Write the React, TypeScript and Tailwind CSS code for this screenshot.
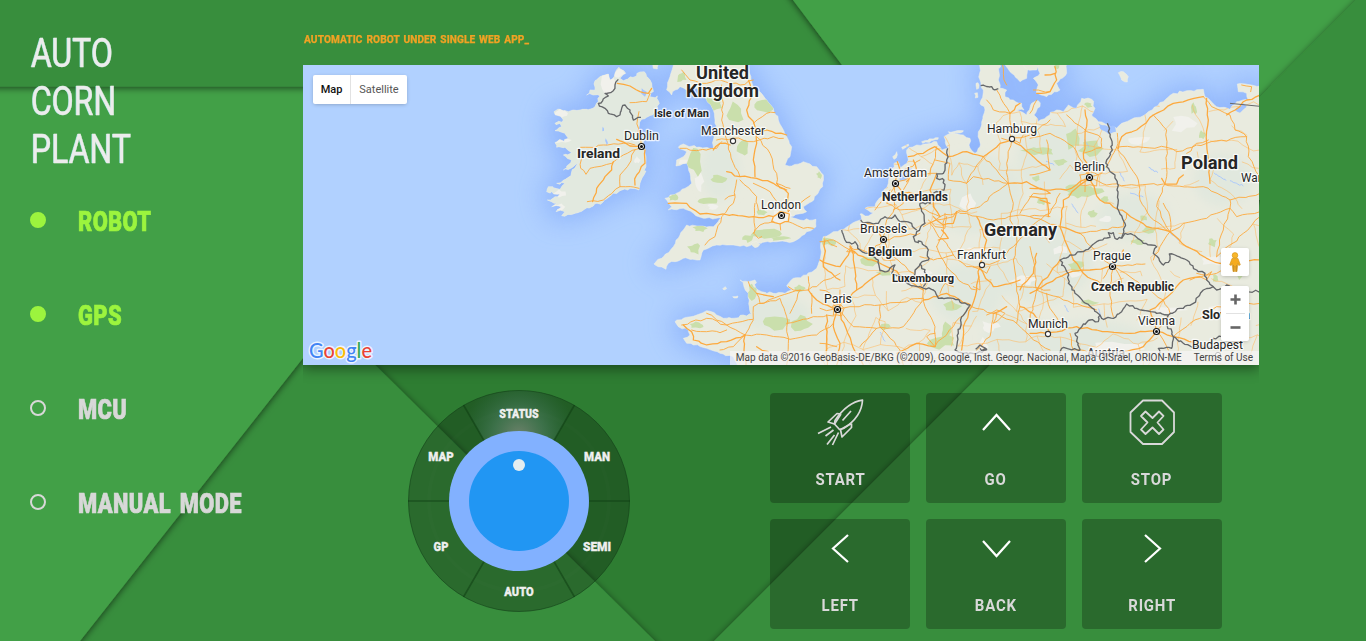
import React from "react";

/* ---------- geometry helpers ---------- */

type Pt = [number, number];

const parse = (s: string): Pt[] =>
  s.trim().split(/\s+/).map((p) => p.split(",").map(Number) as Pt);

const noise = (a: number, b: number) => {
  const v = Math.sin(a * 12.9898 + b * 78.233) * 43758.5453;
  return v - Math.floor(v) - 0.5;
};

/* Breaks straight segments into small uneven steps, as on a surveyed map. */
function rough(s: string, amount: number, step: number, closed = false): string {
  const pts = parse(s);
  if (closed) pts.push(pts[0]);
  const out: string[] = [`M${pts[0][0]} ${pts[0][1]}`];
  for (let i = 1; i < pts.length; i++) {
    const [x0, y0] = pts[i - 1];
    const [x1, y1] = pts[i];
    const len = Math.hypot(x1 - x0, y1 - y0);
    const n = Math.max(1, Math.round(len / step));
    for (let k = 1; k <= n; k++) {
      const t = k / n;
      const x = x0 + (x1 - x0) * t;
      const y = y0 + (y1 - y0) * t;
      const e = k === n ? 0 : amount;
      out.push(`L${(x + noise(x, y) * e).toFixed(1)} ${(y + noise(y, x) * e).toFixed(1)}`);
    }
  }
  return out.join("") + (closed ? "Z" : "");
}

function blob(cx: number, cy: number, rx: number, ry: number): string {
  const out: string[] = [];
  for (let i = 0; i < 11; i++) {
    const a = (i / 11) * Math.PI * 2;
    const r = 0.95 + noise(cx + i, cy) * 0.75;
    out.push(`${(cx + Math.cos(a) * rx * r).toFixed(1)},${(cy + Math.sin(a) * ry * r).toFixed(1)}`);
  }
  return out.join(" ");
}

/* ---------- map data (thirds of a pixel) ---------- */

const ireland =
  "237,22 257,40 240,55 250,62 290,48 300,36 318,42 335,70 340,95 330,110 352,108 358,130 345,150 338,165 320,172 305,178 298,195 300,225 310,250 318,290 318,320 312,345 300,370 297,390 270,385 240,392 215,405 190,425 160,438 130,450 100,462 65,467 75,455 48,455 65,440 35,440 50,430 22,420 45,410 60,402 20,395 25,380 60,388 75,370 50,370 85,352 95,335 110,315 125,295 100,320 70,330 95,300 70,285 95,278 75,262 50,262 45,248 85,235 75,220 45,212 65,200 60,190 45,190 70,180 42,155 60,148 85,155 100,150 140,148 165,140 175,125 180,108 160,105 140,105 150,90 165,90 165,62 180,50 205,42 210,60 225,40";

const britain =
  "400,10 390,50 380,90 395,105 405,90 420,80 440,90 470,85 490,100 500,120 520,150 525,180 528,210 520,240 520,265 470,262 430,252 415,262 440,275 430,290 410,300 408,318 440,310 450,340 455,370 420,395 375,415 395,440 385,450 430,445 460,460 490,475 545,475 520,500 480,498 440,495 420,525 400,560 370,590 342,612 355,620 378,628 385,610 430,595 480,600 490,570 530,555 580,555 620,560 640,550 700,545 760,545 800,515 828,500 828,478 780,480 750,470 800,455 790,440 815,425 848,380 850,345 830,320 790,305 755,318 735,315 750,290 755,260 740,230 715,180 700,145 680,120 640,80 620,10";

const continent =
  "405,785 430,775 470,765 500,752 530,765 550,775 575,775 610,765 635,765 628,740 625,700 612,680 600,660 625,665 645,660 648,685 665,695 700,700 735,700 755,690 740,678 760,655 800,645 830,625 840,600 842,550 850,530 880,515 900,510 930,495 965,480 960,462 985,468 1000,458 975,445 1005,440 1010,425 1030,400 1045,370 1055,340 1062,310 1075,305 1080,330 1105,300 1100,270 1130,255 1190,245 1205,270 1225,265 1212,230 1240,220 1270,225 1290,235 1287,255 1305,280 1320,260 1315,215 1325,195 1335,150 1320,130 1330,90 1320,60 1318,8 1380,8 1375,60 1380,85 1400,90 1395,110 1420,120 1445,130 1452,150 1430,150 1460,165 1475,130 1495,122 1500,140 1482,165 1495,185 1520,170 1550,150 1570,155 1585,135 1610,145 1625,115 1655,118 1665,145 1655,165 1675,185 1705,195 1730,205 1745,190 1770,180 1820,160 1870,125 1900,100 1940,92 1990,88 1995,110 2030,140 2070,148 2090,125 2125,120 2120,100 2095,95 2092,72 2135,75 2170,80 2170,925 600,925 580,890 540,880 500,865 460,855 440,850 430,835 450,825 445,810 415,800";

const islands = [
  "1392,10 1465,10 1460,55 1440,65 1410,35",
  "1485,10 1580,10 1580,40 1550,70 1560,90 1520,110 1490,100 1495,75 1480,55 1500,40",
  "1735,38 1750,35 1765,50 1762,66 1745,60",
  "635,548 650,545 660,553 645,563 635,555",
  "338,12 355,12 352,27 340,25",
  "548,686 556,680 560,686 552,690",
  "578,710 594,708 592,714 582,714",
  "1058,290 1070,275 1072,285 1062,298",
  "1085,262 1105,252 1106,257 1088,268",
  "1145,245 1195,233 1194,238 1148,250",
  "1225,215 1270,212 1268,216 1228,219",
  "1308,70 1314,68 1316,85 1310,88",
  "1304,100 1312,98 1314,112 1306,114",
  "1448,10 1500,10 1490,30 1460,28",
];

const roadsWest = [
  "232,70 270,78 300,95 325,100 335,85",
  "270,128 320,125 330,100",
  "297,155 293,175 294,220 304,258",
  "304,258 270,258 230,238",
  "285,255 250,250 190,255 150,262 122,262",
  "304,262 290,268 250,285 215,310 150,325 138,343 122,325 125,295",
  "220,305 215,330 195,350 170,385 158,425",
  "142,425 190,420 240,380 297,385",
  "285,270 262,320 240,345 240,380",
  "315,270 315,310 290,345 285,375",
  "425,30 450,60 500,70 540,60 600,75 640,60",
  "545,75 550,130 545,180 560,240 580,310 600,350",
  "625,60 635,110 620,150 645,200 650,250 640,300 645,350",
  "640,190 680,160 705,158",
  "530,240 580,235 640,245 700,230 730,235",
  "650,215 680,210 740,225",
  "420,265 470,272 530,265 545,245",
  "650,230 690,280 710,340 710,370 750,385",
  "560,335 600,350 650,355 700,370 740,390",
  "590,360 580,430 545,470 525,530 495,555",
  "600,360 650,410 655,450",
  "385,430 440,430 480,462 550,462 640,470 700,470",
  "645,430 642,520 655,535 665,530",
  "640,370 690,395 720,440",
  "700,470 695,485 720,492 745,485 748,462 720,455 700,470",
  "640,520 660,495 700,485",
  "745,485 790,505 820,505",
  "710,370 745,400 745,455",
  "745,455 780,430 810,408",
  "555,418 585,405",
  "520,270 540,250 570,255",
  "720,490 722,510",
  "425,795 500,775 560,795 640,778 640,740 700,715 780,690",
  "430,795 455,815 460,840 500,855 560,845 615,825",
  "615,825 560,795 500,760",
  "615,825 640,780",
  "615,825 612,870 618,915",
  "615,825 680,825 750,838 830,825 880,790",
  "615,825 580,860 540,870",
  "650,860 685,875",
  "455,810 500,815 540,818 560,810",
  "625,665 650,700 660,730 720,715 740,770 745,850 740,915",
  "650,700 700,710",
  "780,690 765,730 750,760",
  "805,650 805,690 760,690 745,680",
  "805,690 830,720 880,745",
  "805,690 840,670 900,640",
  "740,790 820,770 880,768",
  "855,540 850,620 900,660",
  "860,540 890,560",
  "815,700 815,760",
  "860,765 860,830 862,915",
];

const roadsMid = [
  "52,748 75,720 110,690 100,600 90,560",
  "52,748 20,752 0,745",
  "52,748 100,800 170,805 250,800 310,720",
  "52,748 40,800 60,850 50,915",
  "52,748 30,700 0,690",
  "52,748 90,740 180,735 310,715",
  "52,748 95,850 130,915",
  "40,765 65,768 72,745 60,732 38,738 40,765",
  "60,690 60,740",
  "0,600 60,620 90,570 130,590 200,620 310,690",
  "90,570 40,540 0,545",
  "90,555 105,580 80,575 95,560",
  "110,690 180,640",
  "90,560 150,580 190,540 240,530 300,520",
  "190,540 200,480 225,440 225,370",
  "190,540 170,500 140,490",
  "190,540 220,590 280,640 310,690 315,740 345,800 345,860",
  "225,600 190,600 180,560",
  "225,370 240,330 232,305",
  "225,370 270,350 330,340 350,340",
  "225,370 210,400 200,430 240,450 300,445 360,470",
  "225,370 250,400 300,400 330,430",
  "210,390 195,410 165,450",
  "220,450 250,430 250,390 270,350",
  "265,290 310,280 345,260 385,290 440,275 490,290",
  "350,260 340,310 330,345",
  "240,340 300,300",
  "260,365 290,330 280,300",
  "345,300 390,310 385,360 440,370 490,290",
  "360,470 410,460 480,440 520,400 565,370",
  "360,470 340,440 330,390 350,340",
  "360,470 330,490 350,520 380,550 400,585",
  "310,500 350,480 400,470 420,450",
  "340,470 370,495 400,490 410,455",
  "325,480 345,500 375,505 380,470",
  "375,460 370,520 350,560",
  "355,540 385,535 365,510",
  "300,590 340,600 380,590 400,585",
  "400,585 440,620 480,620",
  "480,620 470,690 455,740 430,800 425,870",
  "460,680 480,690 475,640",
  "460,620 500,640 510,620",
  "480,620 500,540 470,470",
  "480,620 540,600 580,560 620,520 690,500",
  "565,370 560,310 575,240",
  "565,370 620,365 690,400",
  "565,370 580,430 570,480 590,530 580,600 590,680 690,690",
  "490,290 530,330 565,370",
  "490,290 540,250 575,240",
  "440,370 460,350 565,370",
  "575,240 630,225 690,180",
  "575,240 640,290 690,330",
  "575,240 570,160 530,90",
  "570,160 520,150 500,120",
  "570,160 600,130",
  "545,235 600,250 610,225",
  "420,460 520,480 600,465 690,470",
  "310,720 380,700 420,720 455,740",
  "360,700 375,670 400,680",
  "455,740 520,760 590,790 640,840 690,870",
  "520,760 560,740",
  "500,765 530,750 555,760 520,790 530,760",
  "520,760 510,830 470,870",
  "480,625 520,680 600,660",
  "470,690 430,670 380,620 350,560",
  "180,735 180,800 240,870 250,915",
  "345,860 290,850 230,880",
  "345,860 320,830 345,820",
  "345,860 400,800 450,740",
  "600,690 640,640 650,580",
  "590,790 600,740 590,680",
  "690,400 640,400 600,460",
  "660,420 690,430",
  "170,805 120,860",
  "0,850 50,860",
  "690,820 640,760 600,740",
  "548,15 552,60 560,75",
];

const roadsEast = [
  "178,352 160,280 170,200 165,150",
  "160,280 215,262 215,235 160,205 110,165",
  "178,352 130,260 60,220 0,235",
  "178,352 110,390 0,385",
  "178,352 230,375 400,372 430,378 520,380 600,420 690,400",
  "178,352 215,340 260,262 262,220",
  "178,352 100,420 90,500 130,600",
  "150,345 150,375 200,378 205,345 180,335 150,345",
  "165,395 165,360 180,350",
  "178,352 210,420 290,460 350,500 420,515",
  "260,262 300,320 325,360 330,420 360,470 420,515",
  "260,262 410,262 410,350 405,372",
  "265,265 275,230 320,210 370,165 430,130 520,110",
  "370,165 410,210 410,262",
  "410,262 440,275 530,250 650,230",
  "530,115 535,180 530,250 540,320 540,370",
  "520,110 545,140 600,165 615,210 650,230 655,290 690,350",
  "470,280 500,250 535,240",
  "590,165 650,120 690,105",
  "635,75 665,80 662,95",
  "405,372 380,440 420,515",
  "395,355 405,372 440,372 460,345",
  "400,430 420,470 420,515",
  "420,515 460,490 530,475 560,460 600,445 600,420",
  "420,515 470,560 540,600 570,610",
  "420,515 390,560 370,600",
  "600,445 580,510 560,590",
  "510,650 460,660 400,720 360,750 379,814",
  "500,640 530,645 545,635 530,660 510,650",
  "480,660 560,640 600,620",
  "570,610 690,600",
  "247,618 200,580 150,520",
  "247,618 320,612 345,612",
  "247,618 180,630 110,640 20,690 0,700",
  "247,618 240,690 250,770",
  "247,618 300,650 400,720",
  "247,618 280,570",
  "247,618 220,655",
  "247,618 265,640 275,670",
  "130,600 160,640 240,690",
  "20,690 100,720 200,750",
  "20,690 10,600 0,560",
  "20,690 60,640 90,600",
  "50,700 60,745 100,800",
  "0,780 20,690",
  "0,820 50,820 140,800 200,810 300,820 379,814",
  "120,820 130,870 200,880",
  "379,814 420,760 400,720",
  "379,814 430,830 520,860",
  "379,814 400,840 415,870",
  "430,830 480,790 560,740 690,730",
  "379,814 340,860 250,880",
  "90,500 0,470",
  "90,400 60,460 0,500",
  "150,520 90,500",
  "150,520 280,500 290,460",
  "50,240 60,330 0,345",
  "0,410 50,415 55,470",
  "690,470 640,520 560,590",
  "600,445 620,470 690,455",
  "20,100 60,95 80,60 75,20",
  "60,95 10,90",
  "0,160 20,120",
  "45,45 75,40",
];

const bordersWest = [
  "235,58 225,75 220,92 195,100 205,108 175,130 195,145 205,160 230,170 240,165 245,145 255,135 270,150 280,180 303,172",
];
const bordersMid = [
  "383,265 380,300 370,340 350,342 350,355 372,360 372,390 340,400 330,430 300,430 310,460 315,490 290,515 280,530 285,545 305,545",
  "122,480 135,488 175,490 195,470 215,475 225,465 240,485 275,490 290,510",
  "65,510 75,540 95,552 105,545 120,570 150,585 175,600 180,632 200,635 225,615 215,640 250,650 265,672",
  "305,545 325,570 325,600 300,612 285,640 265,672 300,680",
  "300,612 325,650 310,680",
  "300,680 340,690 355,715 400,715 450,735 425,770 415,820 405,870 430,880 470,880 500,870",
  "467,868 480,855 500,868 485,872 480,865",
  "482,77 515,80 520,88 535,86",
];
const bordersEast = [
  "232,190 240,230 247,270 230,300 230,320 255,345 262,370 265,420 265,450 285,490 280,520 275,535",
  "275,535 255,535 250,518 235,518 240,532 200,545 160,575 120,585 90,600 115,640 115,670 135,700 160,725 210,765 215,775 250,775 275,755 290,732 320,745 380,760 415,765 450,745 490,730 520,690 550,680 530,660 525,640 500,630 470,600 435,585 418,582 420,600 400,615 370,580 380,560 340,550 310,525 285,520 275,535",
  "210,765 205,785 180,780 135,820 150,870 95,865 90,880",
  "415,765 410,790 430,830 425,865 385,865 390,880",
  "430,830 460,850 490,862 545,862 550,835 575,830",
  "550,680 560,690 590,675 610,690 690,695",
];

const greens: [number, number, number, number][] = [
  [425, 50, 16, 17], [520, 130, 24, 20], [583, 160, 26, 28], [670, 138, 30, 18],
  [608, 266, 17, 26], [463, 305, 20, 38], [535, 355, 22, 12], [495, 423, 34, 11],
  [480, 505, 20, 10], [465, 565, 20, 16], [680, 522, 42, 13], [722, 535, 28, 8],
  [625, 535, 15, 12], [838, 345, 8, 11], [665, 457, 14, 8], [400, 413, 14, 10],
  [638, 695, 15, 22], [710, 790, 40, 18], [785, 792, 26, 24], [865, 545, 22, 12],
  [470, 795, 22, 10], [780, 685, 20, 10], [990, 605, 24, 18], [1030, 640, 22, 8],
  [1033, 800, 15, 12], [1240, 738, 26, 13], [1205, 845, 42, 20], [1218, 815, 16, 28],
  [1490, 275, 44, 10], [1490, 355, 12, 8], [1505, 425, 14, 9], [1600, 235, 18, 36],
  [1655, 265, 34, 22], [1560, 305, 24, 10], [1512, 275, 26, 12], [1620, 385, 42, 12],
  [1650, 395, 34, 14], [1605, 400, 18, 16], [1655, 460, 16, 11], [1695, 420, 16, 9],
  [1830, 510, 24, 9], [1810, 475, 12, 9], [1962, 146, 9, 16], [1985, 225, 11, 11],
  [2018, 548, 13, 13], [2026, 655, 9, 11], [1607, 618, 22, 18], [1650, 728, 22, 8],
  [1795, 545, 22, 9], [1550, 20, 8, 6], [1645, 135, 12, 8], [2100, 640, 14, 16],
];

const pale: [number, number, number, number][] = [
  [200, 65, 22, 32], [238, 42, 16, 12], [65, 160, 20, 14], [68, 240, 24, 10],
  [60, 400, 18, 10], [55, 440, 20, 9], [478, 365, 12, 30], [292, 300, 8, 10],
  [428, 305, 14, 8], [520, 440, 18, 8], [722, 468, 28, 18], [1310, 575, 30, 14],
  [1450, 660, 40, 14], [1280, 430, 22, 26], [1560, 570, 22, 14], [1800, 240, 34, 14],
  [1930, 190, 40, 22], [2020, 600, 40, 16], [1600, 640, 24, 10], [1150, 640, 22, 10],
  [1700, 480, 20, 10], [1880, 750, 50, 12], [1730, 860, 90, 14], [2050, 760, 60, 22],
  [1350, 800, 26, 16], [1330, 860, 14, 30],
];

const cool: [number, number, number, number][] = [
  [1300, 400, 150, 120], [1500, 600, 160, 130], [1280, 700, 110, 90], [1560, 300, 130, 110],
  [700, 760, 110, 50], [1780, 470, 110, 70], [2050, 360, 90, 80], [1650, 850, 180, 70],
  [1430, 830, 100, 70], [540, 330, 60, 90],
];

const waters = [
  "1675,190 1705,200 1725,198 1728,215 1705,222 1685,210",
  "1075,350 1085,335 1105,320 1118,328 1105,345 1098,360 1080,362",
  "2085,150 2110,130 2120,140 2100,158",
  "305,85 320,95 315,110 303,100",
  "188,200 192,212 187,214",
  "197,235 204,250 198,258",
];

const lakes: [number, number, number, number][] = [
  [1605, 445, 10, 14], [1640, 250, 6, 12], [1745, 350, 8, 14], [1790, 405, 20, 6],
  [1840, 330, 14, 8], [2040, 350, 18, 12], [2090, 370, 20, 8], [1905, 530, 14, 12],
  [1028, 830, 8, 14], [1530, 310, 12, 6], [1580, 745, 6, 10], [1680, 760, 4, 14],
];

function minorRoads(): string[] {
  const out: string[] = [];
  const g = 58;
  const node = (i: number, j: number): Pt => [
    870 + i * g + noise(i * 3.1 + 1, j * 7.7) * 50,
    150 + j * g + noise(j * 5.3 + 2, i * 2.9) * 50,
  ];
  for (let i = 0; i < 23; i++) {
    for (let j = 0; j < 14; j++) {
      const a = node(i, j);
      const dense = i < 15 ? 0.06 : -0.2;
      if (noise(i + 0.5, j + 9) < dense) {
        const b = node(i + 1, j);
        out.push(`${a[0]},${a[1]} ${b[0]},${b[1]}`);
      }
      if (noise(i + 4.5, j + 3) < dense) {
        const b = node(i, j + 1);
        out.push(`${a[0]},${a[1]} ${b[0]},${b[1]}`);
      }
    }
  }
  return out;
}

const minor = minorRoads();

/* ---------- map labels (page pixels) ---------- */

type Label = [text: string, x: number, y: number, width: number, size: number, weight: number];

const labels: Label[] = [
  ["United", 696, 79, 53, 17.5, 700],
  ["Kingdom", 686, 97, 73, 17.5, 700],
  ["Isle of Man", 654, 117, 55, 11, 700],
  ["Dublin", 624, 140, 35, 12, 400],
  ["Ireland", 577, 158, 43, 13.5, 700],
  ["Manchester", 701, 135, 64, 12, 400],
  ["London", 761, 209, 40, 12, 400],
  ["Amsterdam", 864, 177, 63, 12, 400],
  ["Netherlands", 882, 201, 66, 12, 700],
  ["Brussels", 860, 233, 47, 12, 400],
  ["Belgium", 868, 256, 44, 12, 700],
  ["Luxembourg", 892, 282, 62, 11, 700],
  ["Hamburg", 987, 133, 50, 12, 400],
  ["Frankfurt", 957, 259, 49, 12, 400],
  ["Paris", 824, 303, 28, 12, 400],
  ["Germany", 984, 236, 73, 18, 700],
  ["Berlin", 1074, 171, 31, 12, 400],
  ["Poland", 1181, 169, 57, 18, 700],
  ["Warsaw", 1241, 182, 42, 12, 400],
  ["Prague", 1093, 260, 38, 12, 400],
  ["Czech Republic", 1091, 291, 83, 12, 700],
  ["Munich", 1028, 328, 40, 12, 400],
  ["Vienna", 1138, 325, 37, 12, 400],
  ["Slovakia", 1202, 319, 48, 12, 700],
  ["Budapest", 1192, 349, 51, 12, 400],
];

const capitals: Pt[] = [
  [641.5, 146.5], [781.5, 215.5], [895.5, 183.5], [883.5, 239.5], [837.5, 309.5],
  [1089.5, 177.5], [1112.5, 266.5], [1156.5, 331.5],
];
const towns: Pt[] = [[733, 141], [1012, 139], [982, 265], [1048, 334]];

function Roads({ list, x, strong }: { list: string[]; x: number; strong?: boolean }) {
  return (
    <g transform={`translate(${x} 0)`}>
      {list.map((r, i) => (
        <path key={i} d={rough(r, 7, 16)} strokeWidth={strong ? (i % 3 === 0 ? 3.8 : 2.7) : 2.2} />
      ))}
    </g>
  );
}

function MapCanvas() {
  const land = [rough(ireland, 9, 9, true), rough(britain, 6, 10, true), rough(continent, 7, 10, true)].concat(
    islands.map((s) => rough(s, 5, 9, true)),
  );
  return (
    <svg viewBox="303 65 956 300" className="block h-[300px] w-[956px]">
      <defs>
        <filter id="shore" x="-15%" y="-15%" width="130%" height="130%">
          <feGaussianBlur stdDeviation="42" />
        </filter>
        <filter id="soft" x="-50%" y="-50%" width="200%" height="200%">
          <feGaussianBlur stdDeviation="14" />
        </filter>
        <clipPath id="landClip">
          {land.map((d, i) => (
            <path key={i} d={d} />
          ))}
        </clipPath>
      </defs>
      <rect x="303" y="65" width="956" height="300" fill="#b1d1ff" />
      <g transform="translate(540 60) scale(0.33333)">
        <g filter="url(#shore)" fill="#86adfb" stroke="#86adfb" strokeWidth="30" opacity="0.82">
          {land.slice(0, 5).map((d, i) => (
            <path key={i} d={d} />
          ))}
        </g>
        <g fill="#e9ebdf" stroke="#eef0ea" strokeWidth="1.5">
          {land.map((d, i) => (
            <path key={i} d={d} />
          ))}
        </g>
        <g clipPath="url(#landClip)">
          <path d={land[0]} fill="#e2e9df" />
          <g fill="#e1e8de" filter="url(#soft)">
            {cool.map(([x, y, rx, ry], i) => (
              <ellipse key={i} cx={x} cy={y} rx={rx} ry={ry} />
            ))}
          </g>
          <g fill="#f1f1ec">
            {pale.map((p, i) => (
              <polygon key={i} points={blob(...p)} />
            ))}
          </g>
          <g fill="#cadfac">
            {greens.map((p, i) => (
              <polygon key={i} points={blob(...p)} />
            ))}
          </g>
          <g fill="none" stroke="#a3c4ff" strokeWidth="2.6">
            {lakes.map(([x, y, rx, ry], i) => (
              <path key={i} d={rough(`${x - rx},${y - ry} ${x},${y} ${x + rx},${y + ry}`, 5, 6)} />
            ))}
          </g>
          <g fill="none" stroke="#ffb95e" strokeLinejoin="round" strokeOpacity="0.75">
            <Roads list={minor} x={0} />
          </g>
        </g>
        <g fill="#a3c4ff">
          {waters.map((w, i) => (
            <path key={i} d={rough(w, 4, 8, true)} />
          ))}
        </g>
        <g fill="none" stroke="#fda93d" strokeLinejoin="round" strokeLinecap="round">
          <Roads list={roadsWest} x={0} strong />
          <Roads list={roadsMid} x={840} strong />
          <Roads list={roadsEast} x={1470} strong />
        </g>
        <g fill="none" stroke="#66686b" strokeWidth="4" strokeLinejoin="round">
          {bordersWest.map((b, i) => (
            <path key={i} d={rough(b, 7, 8)} />
          ))}
          <g transform="translate(840 0)">
            {bordersMid.map((b, i) => (
              <path key={i} d={rough(b, 7, 8)} />
            ))}
          </g>
          <g transform="translate(1470 0)">
            {bordersEast.map((b, i) => (
              <path key={i} d={rough(b, 7, 8)} />
            ))}
            <path d="M600 130L690 139" strokeWidth="3" />
          </g>
        </g>
      </g>
      {towns.map(([x, y], i) => (
        <circle key={i} cx={x} cy={y} r="2.6" fill="#fff" stroke="#333" strokeWidth="1.1" />
      ))}
      {capitals.map(([x, y], i) => (
        <g key={i}>
          <circle cx={x} cy={y} r="3" fill="#fff" stroke="#111" strokeWidth="1.2" />
          <circle cx={x} cy={y} r="1.5" fill="#111" />
        </g>
      ))}
      <g
        fontFamily="Roboto, sans-serif"
        fill="#262626"
        stroke="#fff"
        strokeOpacity="0.75"
        strokeWidth="2.6"
        strokeLinejoin="round"
        paintOrder="stroke"
      >
        {labels.map(([t, x, y, w, size, weight]) => (
          <text key={t} x={x} y={y} textLength={w} lengthAdjust="spacingAndGlyphs" fontSize={size} fontWeight={weight}>
            {t}
          </text>
        ))}
        <text x="1087" y="357" textLength="38" fontSize="12" fontWeight="500" fill="#444">
          Austria
        </text>
      </g>
      <circle cx="1218" cy="355" r="2.6" fill="#fff" stroke="#444" />
      <text
        x="309"
        y="357.5"
        textLength="63"
        lengthAdjust="spacingAndGlyphs"
        fontFamily="Lato, sans-serif"
        fontWeight="500"
        fontSize="21.5"
        stroke="#fff"
        strokeOpacity="0.75"
        strokeWidth="3"
        strokeLinejoin="round"
        paintOrder="stroke"
      >
        <tspan fill="#4285f4">G</tspan>
        <tspan fill="#ea4335">o</tspan>
        <tspan fill="#fbbc05">o</tspan>
        <tspan fill="#4285f4">g</tspan>
        <tspan fill="#34a853">l</tspan>
        <tspan fill="#ea4335">e</tspan>
      </text>
    </svg>
  );
}

function MapPanel() {
  return (
    <section className="relative h-[300px] w-[956px] overflow-hidden font-['Roboto',sans-serif]">
      <MapCanvas />
      <div className="absolute top-[10px] left-[10px] flex h-[29px] rounded-[2px] bg-white text-[11px] leading-[29px] shadow-[0_1px_4px_-1px_rgba(0,0,0,0.3)]">
        <span className="w-[38px] border-r border-[#e2e2e2] text-center font-medium text-[#111]">Map</span>
        <span className="w-[56px] text-center text-[#565656]">Satellite</span>
      </div>
      <div className="absolute right-[10px] bottom-[24px] flex w-[28px] flex-col gap-[10px]">
        <div className="flex h-[28px] items-center justify-center rounded-[2px] bg-white shadow-[0_1px_4px_-1px_rgba(0,0,0,0.3)]">
          <svg viewBox="0 0 14 20" className="h-[20px] w-[14px]">
            <path d="M4 6.500H10L12.300 12.800L10.800 13.500L9.800 11.500L9 19.500H7.400L7 14L6.600 19.500H5L4.200 11.500L3.200 13.500L1.700 12.800Z" fill="#f5ab1e" stroke="#d08f14" strokeWidth="0.6" />
            <circle cx="7" cy="3.4" r="2.8" fill="#f8b62a" stroke="#d39316" strokeWidth="0.6" />
            <path d="M5.500 13V19.500M8.500 13V19.500" stroke="#b3822a" strokeWidth="0.6" />
          </svg>
        </div>
        <div className="flex h-[55px] flex-col items-center rounded-[2px] bg-white shadow-[0_1px_4px_-1px_rgba(0,0,0,0.3)]">
          <svg viewBox="0 0 28 27" className="h-[27px] w-[28px]">
            <path d="M9.500 13.500H19.500M14.500 8.500V18.500" stroke="#666" strokeWidth="2.6" />
          </svg>
          <span className="h-px w-[19px] bg-[#e2e2e2]" />
          <svg viewBox="0 0 28 27" className="h-[27px] w-[28px]">
            <path d="M9.500 13.500H19.500" stroke="#666" strokeWidth="2.6" />
          </svg>
        </div>
      </div>
      <div className="absolute right-0 bottom-0 flex h-[14px] gap-[12px] bg-[#f5f5f5]/70 pr-[6px] pl-[6px] text-[10px] leading-[14px] whitespace-nowrap text-[#444]">
        <span>Map data ©2016 GeoBasis-DE/BKG (©2009), Google, Inst. Geogr. Nacional, Mapa GISrael, ORION-ME</span>
        <span>Terms of Use</span>
      </div>
    </section>
  );
}

/* ---------- backdrop ---------- */

function Backdrop() {
  return (
    <svg viewBox="0 0 1366 641" className="absolute inset-0 h-[641px] w-[1366px]">
      <defs>
        <filter id="fold" x="-10%" y="-10%" width="120%" height="120%">
          <feDropShadow dx="0" dy="1.5" stdDeviation="3.500" floodColor="#000" floodOpacity="0.58" />
        </filter>
      </defs>
      <rect width="1366" height="641" fill="#2e7d32" />
      <path d="M-20 200H208L655 641L675 661H-20Z" fill="#388e3c" filter="url(#fold)" />
      <path d="M1386 -40L990 365L714 641L694 661H1386Z" fill="#388e3c" filter="url(#fold)" />
      <path d="M-20 60H538L303 358L80 641L64 661H-20Z" fill="#43a047" filter="url(#fold)" />
      <path d="M-20 -20H1386V60L1259 97L900 86.500H-20Z" fill="#388e3c" filter="url(#fold)" />
      <path d="M778 -20L793 0L842 65L880 115H1259L1400 -20Z" fill="#43a047" filter="url(#fold)" />
      <path d="M1386 -28L1356 0L1242 115V200H1386Z" fill="#388e3c" filter="url(#fold)" />
      <rect x="1260" y="120" width="106" height="300" fill="#388e3c" />
    </svg>
  );
}

/* ---------- sidebar ---------- */

const nav = [
  { label: "ROBOT", on: true },
  { label: "GPS", on: true },
  { label: "MCU", on: false },
  { label: "MANUAL MODE", on: false },
];

function Sidebar() {
  return (
    <aside className="w-[303px] shrink-0 pl-[30px]">
      <h1 className="mt-[30px] ml-px w-[140px] origin-left scale-x-[0.8] text-[40px] leading-[48px] font-normal text-[#ececec] [-webkit-text-stroke:0.4px_#ececec] [text-shadow:-1px_0_0_#7fd6c8]">
        AUTO
        <br />
        CORN
        <br />
        PLANT
      </h1>
      <ul className="-mt-px flex flex-col">
        {nav.map((n) => (
          <li
            key={n.label}
            className={n.on ? "flex h-[94px] items-center gap-[32px] text-[#9cf43e]" : "flex h-[94px] items-center gap-[32px] text-[#d8d8d8]"}
          >
            <span className={n.on ? "size-4 rounded-full border-2 border-current bg-current" : "size-4 rounded-full border-2 border-current"} />
            <span className="origin-left scale-x-[0.78] pt-[3px] text-[28px] leading-none font-black tracking-[0.5px] whitespace-nowrap [-webkit-text-stroke:0.7px_currentColor] [word-spacing:4px]">
              {n.label}
            </span>
          </li>
        ))}
      </ul>
    </aside>
  );
}

/* ---------- mode dial ---------- */

const modes = [
  { label: "STATUS", cls: "left-[111px] top-[23.5px] scale-x-[0.78]" },
  { label: "MAN", cls: "left-[189px] top-[67px] scale-x-[0.85]" },
  { label: "SEMI", cls: "left-[189px] top-[157px] scale-x-[0.88]" },
  { label: "AUTO", cls: "left-[111px] top-[202px] scale-x-[0.82]" },
  { label: "GP", cls: "left-[33px] top-[157px] scale-x-[0.82]" },
  { label: "MAP", cls: "left-[33px] top-[67px] scale-x-[0.85]" },
];

function Dial() {
  return (
    <div className="relative size-[222px] text-[13.5px] leading-none font-black text-[#efefef] [-webkit-text-stroke:0.35px_#efefef]">
      <svg viewBox="0 0 222 222" className="block size-full">
        <defs>
          <radialGradient id="glow" gradientUnits="userSpaceOnUse" cx="111" cy="45" r="56">
            <stop offset="0" stopColor="#a09a9a" stopOpacity="0.6" />
            <stop offset="0.45" stopColor="#5f8a78" stopOpacity="0.45" />
            <stop offset="1" stopColor="#3f7a60" stopOpacity="0" />
          </radialGradient>
        </defs>
        <circle cx="111" cy="111" r="110.500" fill="#000" fillOpacity="0.25" stroke="#123f17" strokeOpacity="0.6" />
        <circle cx="111" cy="111" r="90" fill="none" stroke="#fff" strokeOpacity="0.012" strokeWidth="4" />
        <path d="M111 111L56 15.500A110 110 0 0 1 166 15.500Z" fill="url(#glow)" />
        <g stroke="#0b3a10" strokeOpacity="0.5" strokeWidth="1.6">
          <path d="M0 111H222M55.500 15L166.500 207M166.500 15L55.500 207" />
        </g>
        <circle cx="111" cy="111" r="70" fill="#82b1ff" />
        <circle cx="111" cy="111" r="50" fill="#2196f3" />
        <circle cx="111" cy="75" r="6" fill="#e4edf0" />
      </svg>
      {modes.map((m) => (
        <span key={m.label} className={"absolute -translate-x-1/2 -translate-y-1/2 " + m.cls}>
          {m.label}
        </span>
      ))}
    </div>
  );
}

/* ---------- drive controls ---------- */

const icons: Record<string, React.ReactNode> = {
  START: (
    <g stroke="#d9d9d9" strokeWidth="1.7" strokeLinejoin="round" fill="none">
      <path d="M45.500 1.200C36 2.500 26.500 9 18 21.500L17.500 25L22.500 30.500L26.500 29.500C39 21.500 45 11.500 45.500 1.200Z" />
      <path d="M24 15L20 14.500L11 23L17.500 25L24 15M34.500 24.500V28.500L25 38L23.500 30.500L34.500 24.500" />
      <path d="M34 12L25.500 21.500M14 28L1 34.500M16.500 31L8.500 37M17.500 36L10 45.500M21.500 33.500L15.500 46" />
    </g>
  ),
  GO: <path d="M10 31L23.500 16L37 31" stroke="#fff" strokeWidth="2.2" fill="none" />,
  STOP: (
    <g stroke="#d9d9d9" strokeWidth="1.8" fill="none" strokeLinejoin="round">
      <path d="M14 1.500H33L45 13.500V33L33 45H14L1.500 33V13.500Z" />
      <path d="M16.500 12.500L23.500 19L30 12.500L34.500 17L28.500 23.500L34.500 30.500L30 35L23.500 28.500L16.500 35L12 30.500L18.500 23.500L12 17Z" />
    </g>
  ),
  LEFT: <path d="M31 10L16 23.500L31 37" stroke="#fff" strokeWidth="2.2" fill="none" />,
  BACK: <path d="M10 16L23.500 31L37 16" stroke="#fff" strokeWidth="2.2" fill="none" />,
  RIGHT: <path d="M16 10L31 23.500L16 37" stroke="#fff" strokeWidth="2.2" fill="none" />,
};

function Controls() {
  return (
    <div className="grid grid-cols-[140px_140px_140px] grid-rows-[110px_110px] gap-4">
      {Object.keys(icons).map((k) => (
        <button key={k} className="flex flex-col items-center rounded bg-black/25 pt-[6px]">
          <svg viewBox="0 0 48 48" className="ml-[2px] size-[48px]">
            {icons[k]}
          </svg>
          <span className="mt-[22px] scale-x-[0.88] text-[17px] leading-[20px] font-bold tracking-[0.9px] text-[#d9d9d9]">{k}</span>
        </button>
      ))}
    </div>
  );
}

export default function App() {
  return (
    <div className="relative h-[641px] w-[1366px] overflow-hidden bg-[#388e3c] font-['Roboto',sans-serif]">
      <Backdrop />
      <div className="relative flex h-full">
        <Sidebar />
        <main className="flex w-[956px] flex-col">
          <p className="flex h-[65px] shrink-0 items-start pt-[33px] pl-px">
            <span className="origin-left scale-x-[0.88] text-[11.5px] leading-[13px] font-extrabold tracking-[0.1px] whitespace-nowrap text-[#f0a224] [-webkit-text-stroke:0.25px_#f0a224] [word-spacing:1.4px]">
              AUTOMATIC ROBOT UNDER SINGLE WEB APP_
            </span>
          </p>
          <div className="shadow-[0_4px_12px_rgba(0,0,0,0.42)] [clip-path:inset(0_0_-30px_0)]">
            <MapPanel />
          </div>
          <div className="flex items-start pl-[105px]">
            <div className="pt-[25px]">
              <Dial />
            </div>
            <div className="pt-[28px] pl-[140px]">
              <Controls />
            </div>
          </div>
        </main>
      </div>
    </div>
  );
}
